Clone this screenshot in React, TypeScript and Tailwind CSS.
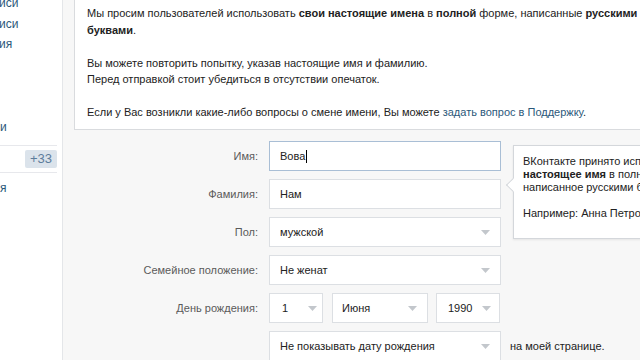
import React from 'react';

const font = { fontFamily: '"Liberation Sans", Arial, sans-serif' };

const Arrow: React.FC = () => (
  <svg width="9" height="5" viewBox="0 0 9 5" className="shrink-0">
    <path d="M0 0 L9 0 L4.5 5 Z" fill="#c3c7cc" />
  </svg>
);

const Field: React.FC<{ value: string; focus?: boolean; caret?: boolean }> = ({ value, focus, caret }) => (
  <div
    className={`h-[30px] w-[232px] bg-white border flex items-center pl-[10px] text-[11px] text-[#222] ${
      focus ? 'border-[#a9bed5]' : 'border-[#dcdfe3]'
    }`}
  >
    {value}
    {caret && <span className="w-px h-[13px] bg-black ml-[1px]" />}
  </div>
);

const Select: React.FC<{ value: string; width: string; px: string }> = ({ value, width, px }) => (
  <div className={`h-[30px] ${width} bg-white border border-[#dcdfe3] flex items-center justify-between ${px} text-[11px] text-[#222]`}>
    <span>{value}</span>
    <Arrow />
  </div>
);

const Row: React.FC<{ label?: string; children: React.ReactNode }> = ({ label, children }) => (
  <div className="flex items-center h-[30px]">
    <div className="w-[184px] text-right text-[11px] text-[#5a5a5a]">{label}</div>
    <div className="ml-[11px] flex items-center">{children}</div>
  </div>
);

const App: React.FC = () => {
  return (
    <div className="w-[640px] h-[360px] flex overflow-hidden bg-white" style={font}>
      {/* Sidebar (cut off on the left) */}
      <div className="w-[63px] shrink-0 border-r border-[#e4e6e9] bg-white text-[12px] text-[#2b587a] flex flex-col">
        <div className="h-[20.5px] leading-[6px] -ml-[1px]">иси</div>
        <div className="h-[20.5px] leading-[6px] -ml-[1px]">иси</div>
        <div className="h-[20.5px] leading-[6px] -ml-[1px]">ия</div>
        <div className="h-[20.5px]" />
        <div className="h-[20.5px]" />
        <div className="h-[20.5px]" />
        <div className="h-[21px] leading-[8px]">и</div>
        <div className="mr-[5px] border-t border-[#e7e8ec] mt-[1px]" />
        <div className="h-[26px] flex items-center justify-end pr-[5px]">
          <span className="bg-[#dbe3eb] text-[#5d7d9c] text-[13px] px-[5px] h-[18px] leading-[18px] rounded-[2px]">+33</span>
        </div>
        <div className="mr-[5px] border-t border-[#e7e8ec]" />
        <div className="mt-[8px] leading-[14px]">я</div>
      </div>

      {/* Main */}
      <div className="flex-1 bg-[#f7f7f7] pl-[11px] relative">
        <div className="w-[640px] h-[130px] bg-white border-l border-b border-[#d9dbde] pl-[12px] pt-[5px] text-[11px] text-[#222] leading-[16.5px] whitespace-nowrap">
          <div>
            Мы просим пользователей использовать <b>свои настоящие имена</b> в <b>полной</b> форме, написанные{' '}
            <b>русскими</b>
          </div>
          <div>
            <b>буквами</b>.
          </div>
          <div className="h-[16.5px]" />
          <div>Вы можете повторить попытку, указав настоящие имя и фамилию.</div>
          <div>Перед отправкой стоит убедиться в отсутствии опечаток.</div>
          <div className="h-[16.5px]" />
          <div>
            Если у Вас возникли какие-либо вопросы о смене имени, Вы можете{' '}
            <span className="text-[#2b587a]">задать вопрос в Поддержку</span>.
          </div>
        </div>

        <div className="mt-[11px] flex flex-col gap-[8px]">
          <Row label="Имя:">
            <Field value="Вова" focus caret />
          </Row>
          <Row label="Фамилия:">
            <Field value="Нам" />
          </Row>
          <Row label="Пол:">
            <Select value="мужской" width="w-[232px]" px="pl-[10px] pr-[10px]" />
          </Row>
          <Row label="Семейное положение:">
            <Select value="Не женат" width="w-[232px]" px="pl-[10px] pr-[10px]" />
          </Row>
          <Row label="День рождения:">
            <div className="flex">
              <Select value="1" width="w-[54px]" px="pl-[12px] pr-[5px]" />
              <div className="ml-[9px]">
                <Select value="Июня" width="w-[96px]" px="pl-[9px] pr-[10px]" />
              </div>
              <div className="ml-[8px]">
                <Select value="1990" width="w-[64px]" px="pl-[11px] pr-[8px]" />
              </div>
            </div>
          </Row>
          <Row>
            <Select value="Не показывать дату рождения" width="w-[232px]" px="pl-[10px] pr-[10px]" />
            <span className="ml-[9px] text-[11px] text-[#222]">на моей странице.</span>
          </Row>
        </div>

        {/* Tooltip */}
        <div className="absolute left-[450px] top-[145px] w-[200px] h-[94px] bg-white border border-[#d4d7db] shadow-[0_1px_2px_rgba(0,0,0,0.08)] pl-[9px] pt-[9px] text-[11px] text-[#222] leading-[13px] whitespace-nowrap">
          <div className="absolute -left-[6px] top-[34px] w-[10px] h-[10px] bg-white border-l border-b border-[#d4d7db] rotate-45" />
          <div>ВКонтакте принято использовать</div>
          <div>
            <b>настоящее имя</b> в полной форме,
          </div>
          <div>написанное русскими буквами.</div>
          <div className="h-[13px]" />
          <div>Например: Анна Петрова</div>
        </div>
      </div>
    </div>
  );
};

export default App;
